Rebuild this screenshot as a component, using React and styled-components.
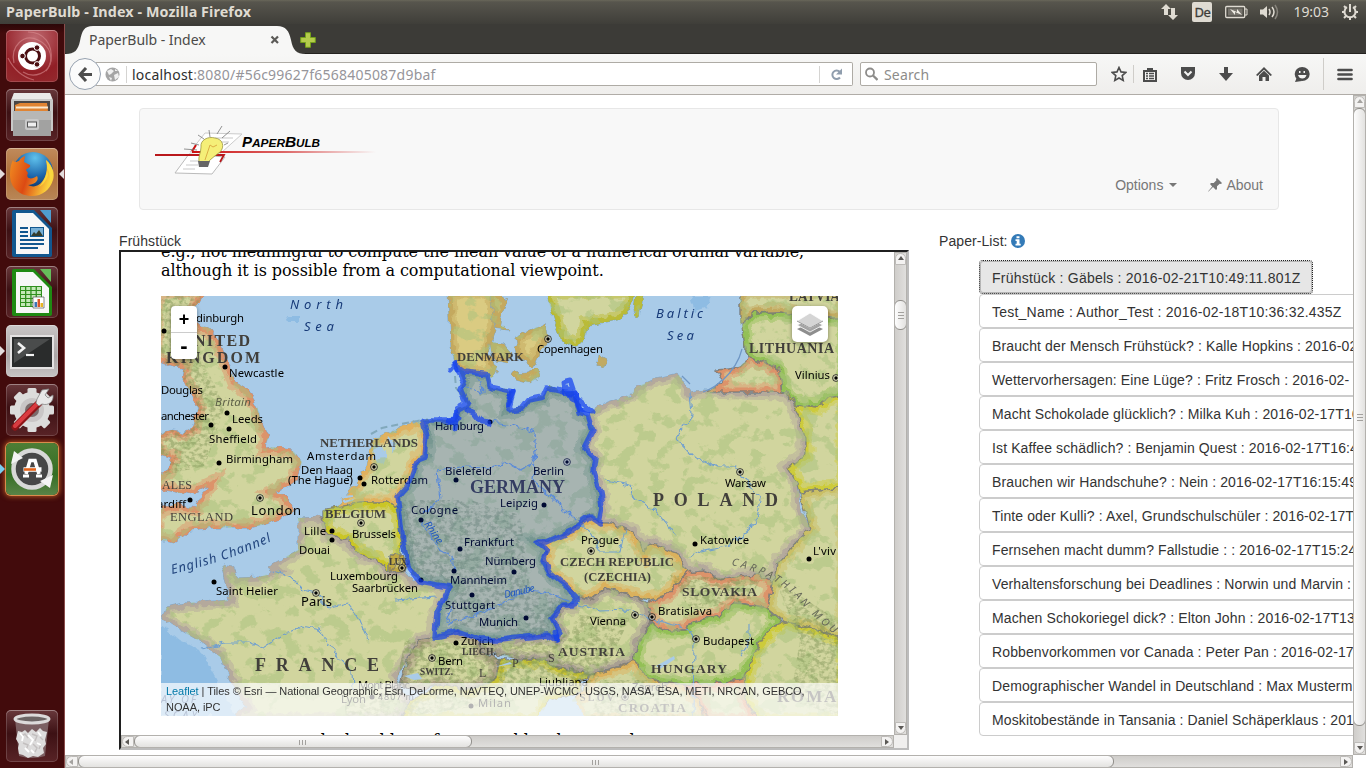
import React from "react";
import styled, { createGlobalStyle, css } from "styled-components";

const Global = createGlobalStyle`
  * { box-sizing: border-box; }
  html, body { margin: 0; padding: 0; overflow: hidden; }
  body { font-family: "Liberation Sans", Arial, sans-serif; font-size: 14px; color: #333; background: #fff; }
`;

const Desktop = styled.div`
  width: 1366px; height: 768px; display: flex; flex-direction: column; overflow: hidden;
`;
const TopPanel = styled.header`
  height: 24px; flex: none; display: flex; align-items: center; justify-content: space-between;
  padding: 0 8px 0 6px; color: #dfdbd2;
  background: linear-gradient(#69675a 0, #57554d 2px, #3f3e39 100%);
  font-family: "Noto Sans", sans-serif; font-size: 14px;
`;
const WindowTitle = styled.div`
  font-size: 14.3px; font-weight: 700; line-height: 24px; white-space: nowrap; letter-spacing: 0.1px;
`;
const Indicators = styled.div`display: flex; align-items: center; height: 24px;`;
const Lang = styled.div`
  width: 20px; height: 20px; margin: 0 13px 0 14px; border-radius: 2px; background: #dfdbd2; color: #3d3c38;
  font-size: 13px; line-height: 20px; text-align: center; letter-spacing: -0.5px; -webkit-text-stroke: 0.3px #3d3c38;
`;
const Clock = styled.div`margin: 0 13px 0 13px; font-size: 14px; letter-spacing: -0.05px; line-height: 24px;`;
const Body = styled.div`display: flex; flex: 1; min-height: 0;`;

const Launcher = styled.nav`
  width: 65px; flex: none; display: flex; flex-direction: column; padding: 6px 0 6px 6px; gap: 7px;
  background: linear-gradient(#2b0708 0, #420b0c 9px, #420b0c 100%);
  border-right: 1px solid #8b4d4c;
`;
const tones = {
  red: "radial-gradient(circle at 55% 15%, #bf6970, #921f26 65%, #942b2f)",
  dark: "linear-gradient(#68383b, #3d1114 45%, #582326)",
  orange: "linear-gradient(#c08b5c, #b06f38 50%, #b98757)",
  grey: "linear-gradient(#c9c6c6, #aba6a6 60%, #c7c4c4)",
  green: "linear-gradient(#4d7d35, #356e24 60%, #598347)",
};
const Tile = styled.div`
  position: relative; width: 52px; height: 52px; flex: none; border-radius: 5px; background: ${(p) => tones[p.$tone]};
  box-shadow: inset 0 0 0 1px rgba(255,255,255,.16), inset 0 1px 0 rgba(255,255,255,.25);
  ${(p) => p.$active && css`box-shadow: 0 0 0 1px #d98c4b, 0 0 5px 2px #a85022;`}
  ${(p) => p.$last && css`margin-top: auto;`}
  > svg { display: block; }
`;
const Pip = styled.i`
  position: absolute; top: 21px; width: 0; height: 0; border: 5px solid transparent;
  ${(p) => p.$right ? css`right: -6px; border-right-color: #e3dcdc; border-left: 0;`
    : css`left: -6px; border-left-color: ${p.$blue ? "#79cdf0" : "#e3dcdc"}; border-right: 0;`}
`;

const Browser = styled.main`flex: 1; display: flex; flex-direction: column; min-width: 0;`;
const TabStrip = styled.div`
  height: 30px; flex: none; display: flex; align-items: flex-end; background: #3c3b37; border-bottom: 1px solid #242320;
`;
const TabShape = styled.div`
  position: relative; width: 243px; height: 28px; margin-bottom: -1px; display: flex; align-items: center;
  font: 14px "Noto Sans", sans-serif; color: #4b4a48;
  > svg:first-child { position: absolute; inset: 0; }
`;
const TabText = styled.span`position: relative; padding-left: 24px; width: 204px; letter-spacing: -0.05px; margin-top: -2px;`;
const TabClose = styled.svg`position: relative; flex: none;`;
const NewTab = styled.svg`margin: 0 0 5px -8px;`;

const Toolbar = styled.div`
  height: 41px; flex: none; display: flex; align-items: center; padding-left: 4px;
  background: linear-gradient(#f7f7f6, #efeeec); border-bottom: 1px solid #b0aca7;
  font: 14px "Noto Sans", sans-serif;
`;
const BackButton = styled.div`
  width: 32px; height: 32px; border-radius: 50%; border: 1px solid #97a2b0; background: #fbfbfb; flex: none;
  display: grid; place-items: center; z-index: 1;
`;
const UrlBar = styled.div`
  width: 757px; height: 24px; margin-left: -5px; padding-left: 9px; border: 1px solid #aeaba5; border-left: 0;
  background: #fff; border-radius: 0 2px 2px 0; display: flex; align-items: center; color: #96959a;
`;
const UrlText = styled.div`
  margin-left: 6px; padding-left: 5px; border-left: 1px solid #d5d4d2; line-height: 17px; flex: 1; letter-spacing: 0.22px; white-space: nowrap;
  b { font-weight: 400; color: #2e2e2e; }
`;
const Reload = styled.div`width: 33px; border-left: 1px solid #d5d4d2; height: 17px; display: grid; place-items: center;`;
const SearchBox = styled.div`
  width: 237px; height: 24px; margin-left: 7px; border: 1px solid #aeaba5; border-radius: 2px; background: #fff; color: #8d8c8a;
  display: flex; align-items: center; gap: 6px; padding-left: 4px; letter-spacing: 0.15px;
`;
const ToolIcons = styled.div`
  display: flex; align-items: center; margin-left: 14px; height: 40px; flex: 1;
  > svg { flex: none; }
`;
const Divider = styled.i`width: 1px; height: ${(p) => p.$h}px; background: #cfcdc9; margin: 0 ${(p) => p.$r}px 0 ${(p) => p.$l}px;`;

const Viewport = styled.section`flex: 1; display: grid; grid-template: 1fr 13px / 1fr 13px; min-height: 0;`;
const Page = styled.div`overflow: hidden; padding: 13px 0 0 54px; background: #fff; min-width: 0; height: 660px;`;
const Navbar = styled.div`
  width: 1140px; height: 102px; margin-left: 20px; border: 1px solid #e7e7e7; border-radius: 4px; background: #f8f8f8;
  display: flex; flex-direction: column; justify-content: space-between; padding: 16px 15px 14px;
  > svg { flex: none; align-self: flex-start; }
`;
const Links = styled.div`display: flex; justify-content: flex-end; color: #777; line-height: 20px; height: 20px; margin-top: -4px; gap: 31px;`;
const Link = styled.span`display: flex; align-items: center; gap: 4px;`;
const Caret = styled.i`border: 4px solid transparent; border-top-color: #777; border-bottom: 0; margin-left: 2px;`;
const Columns = styled.div`display: flex; align-items: flex-start; margin-top: 21px;`;
const Label = styled.div`line-height: 20px; height: 19px; display: flex; align-items: center; gap: 3px; letter-spacing: 0.08px;`;
const Left = styled.div`width: 790px; flex: none;`;
const Frame = styled.div`
  height: 500px; border: 2px solid #1f1f1f; border-right-color: #bcbcbc; border-bottom-color: #bcbcbc;
  display: grid; grid-template: 1fr 13px / 1fr 13px; background: #f0efee;
`;
const Doc = styled.div`
  height: 483px; overflow: hidden; background: #fff; padding-left: 40px;
  font: 16px/19px "DejaVu Serif", serif; color: #000; white-space: nowrap; letter-spacing: -0.08px;
`;
const Para = styled.p`margin: -10px 0 0;`;
const Caption = styled.p`margin: 15px 0 0; padding-left: 101px; font-size: 16px;`;
const MapBox = styled.div`position: relative; width: 677px; height: 420px; margin-top: 16px; overflow: hidden; letter-spacing: 0; svg { display: block; }`;
const ZoomControl = styled.div`
  position: absolute; left: 10px; top: 10px; width: 26px; border-radius: 4px; background: #fff; box-shadow: 0 1px 4px rgba(0,0,0,.4);
  font: 700 18px/26px "Liberation Sans", sans-serif; text-align: center; color: #000;
  > div { height: 26px; } > div + div { height: 27px; border-top: 1px solid #ccc; font-size: 22px; }
`;
const LayerControl = styled.div`
  position: absolute; right: 10px; top: 10px; width: 36px; height: 36px; border-radius: 5px; background: #fff;
  box-shadow: 0 1px 4px rgba(0,0,0,.4); display: grid; place-items: center;
`;
const Attribution = styled.div`
  position: absolute; left: 0; right: 0; bottom: 0; height: 33px; background: rgba(255,255,255,.7); padding: 0 5px;
  font: 11px/16.3px "Liberation Sans", sans-serif; color: #333; white-space: normal; letter-spacing: -0.063px;
  a { color: #0078a8; }
`;
const Right = styled.div`margin-left: 30px; flex: 1; min-width: 0;`;
const List = styled.div`margin: 10px 0 0 40px; display: flex; flex-direction: column; align-items: flex-start;`;
const Entry = styled.div`
  height: 34px; line-height: 20px; padding: 7px 12px 5px; border: 1px solid #ccc; border-radius: 4px; white-space: nowrap; min-width: 400px;
  letter-spacing: ${(p) => (p.$wide ? 0.22 : 0.12)}px;
  ${(p) => p.$on && css`min-width: 0; width: 334px; background: #e6e6e6; border: 1px dotted #222; outline: 1px solid #b5b5b5; outline-offset: -2px; `}
`;

const Track = styled.div`
  display: flex; flex-direction: ${(p) => (p.$v ? "column" : "row")}; align-items: stretch;
  background: linear-gradient(${(p) => (p.$v ? "90deg" : "180deg")}, #cfcdca, #e0dfdd); border: 1px solid #b3b1ad;
  ${(p) => p.$v ? css`width: 13px;` : css`height: 13px;`} overflow: hidden;
`;
const ArrowCap = styled.div`
  flex: 0 0 12px; background: #f3f2f1; display: grid; place-items: center; border-radius: ${(p) => p.$r};
  border: 1px solid #bdbbb8;
`;
const Grip = styled.div`
  flex: 0 0 ${(p) => p.$size}px; margin: ${(p) => (p.$v ? `${p.$at}px -1px 0` : `-1px 0 -1px ${p.$at}px`)};
  background: linear-gradient(${(p) => (p.$v ? "90deg" : "180deg")}, #fdfdfd, #e3e2e0); border: 1px solid #918f8b; border-radius: 6px;
  display: grid; place-items: center;
`;
const Spacer = styled.div`flex: 1;`;

const ARROWS = { up: "M0 4L3 0L6 4z", down: "M0 1L3 5L6 1z", left: "M4 0L0 3L4 6z", right: "M1 0L5 3L1 6z" };
const Arrow = ({ d, dim }) => <svg width="6" height="6"><path d={ARROWS[d]} fill={dim ? "#a5a3a0" : "#5b5956"} /></svg>;

function Scrollbar({ v, size, at, dim }) {
  return (
    <Track $v={v}>
      <ArrowCap $r={v ? "6px 6px 0 0" : "6px 0 0 6px"}><Arrow d={v ? "up" : "left"} dim={dim} /></ArrowCap>
      <Grip $v={v} $size={size} $at={at}>
        <svg width="8" height="8"><path d={v ? "M1 1.5h6M1 4.5h6M1 7.5h6" : "M.5 2v5M3.5 2v5M6.5 2v5"} stroke="#a3a19e" /></svg>
      </Grip>
      <Spacer />
      <ArrowCap $r={v ? "0 0 6px 6px" : "0 6px 6px 0"}><Arrow d={v ? "down" : "right"} /></ArrowCap>
    </Track>
  );
}

/* ---------- launcher icons ---------- */
const Ico = ({ children }) => <svg width="52" height="52" viewBox="0 0 52 52">{children}</svg>;
const DashIcon = () => (
  <Ico>
    <g fill="none" stroke="#d98d90" strokeWidth="1.2" opacity=".6">
      <path d="M8 33C4 16 18 3 32 10C45 16 49 30 40 41" /><path d="M22 2C38 2 47 14 45 31C43 43 28 49 17 42" /><path d="M2 28C8 40 16 47 28 50" />
    </g>
    <circle cx="26" cy="26" r="14" fill="#fff" />
    <circle cx="26.5" cy="26" r="7" fill="none" stroke="#4b0e11" strokeWidth="3" />
    {[[16.5, 26], [31, 17.6], [31, 34.4]].map(([x, y]) => <circle key={y} cx={x} cy={y} r="2.8" fill="#4b0e11" stroke="#fff" strokeWidth="1" />)}
  </Ico>
);
const FilesIcon = () => (
  <Ico>
    <path d="M8 4h36l3 7v31H5V11z" fill="#c9c9c8" /><path d="M8 4h36l2 6H6z" fill="#e9e9e8" />
    <path d="M8 12h36v11H8z" fill="#4a4645" /><path d="M9 16l5-2h27l1 8H9z" fill="#e08433" /><path d="M10 17.5h32v2H10z" fill="#fbe9cf" />
    <path d="M7 22h38v25H7z" fill="#a2a2a1" /><path d="M7 22h38v9H7z" fill="#b7b7b6" />
    <rect x="19" y="30" width="14" height="11" rx="2" fill="#c9c9c9" /><rect x="21.5" y="33" width="9" height="5" fill="#efefef" stroke="#555" />
  </Ico>
);
const FirefoxIcon = () => (
  <Ico>
    <defs>
      <radialGradient id="ffBlue" cx=".55" cy=".15" r=".8"><stop offset="0" stopColor="#5fc1ec" /><stop offset=".6" stopColor="#1a62a8" /><stop offset="1" stopColor="#10305f" /></radialGradient>
      <linearGradient id="ffFox" x1="0" y1="0" x2="1" y2=".3"><stop offset="0" stopColor="#f29022" /><stop offset=".5" stopColor="#dc4a13" /><stop offset="1" stopColor="#fbd13c" /></linearGradient>
    </defs>
    <circle cx="27" cy="24" r="20" fill="url(#ffBlue)" />
    <path d="M7 12C8 15 10 14 13 13C16 8 20 8 19 8L18 14L24 17C25 20 21 20 20 22L22 25C19 31 26 32 31 28C34 33 27 37 22 37C33 43 44 29 40 12C47 18 49 26 47 32C44 42 36 48 26 48C13 48 4 39 4 27C4 20 5 16 7 12z" fill="url(#ffFox)" />
    <path d="M40 12C48 19 49 30 43 38C45 31 44 25 41 20L42 27C40 34 36 37 33 39C40 31 43 22 40 12z" fill="#f9d83e" />
  </Ico>
);
const OfficeIcon = ({ calc }) => {
  const main = calc ? "#1f8a13" : "#12578f";
  const light = calc ? "#66bd5a" : "#4f9dd0";
  return (
    <Ico>
      <path d="M8 3h20l18 18v27a2 2 0 0 1-2 2H8a2 2 0 0 1-2-2V5a2 2 0 0 1 2-2z" fill={main} />
      <path d="M10 6h17l16 16v25H10z" fill="#f7f7f7" /><path d="M34 3h11v13z" fill={light} />
      {calc ? (
        <g><path d="M14 20h22v21H14z" fill="#2f8f1d" /><g fill="#c4e8b8">{[0, 1, 2, 3, 4].map((r) => [0, 1, 2, 3].map((c) => <rect key={`${r}${c}`} x={15 + c * 5.3} y={21 + r * 4} width="4" height="3" />))}</g>
          <path d="M27 31h11v11H27z" fill="#fff" stroke="#555" strokeWidth=".7" /><path d="M28.5 36h2.5v5h-2.5z" fill="#3b74b8" /><path d="M31.5 33h2.5v8h-2.5z" fill="#d8562a" /><path d="M34.5 37h2.5v4h-2.5z" fill="#e7b422" /></g>
      ) : (
        <g><path d="M14 21h8M14 25h8M14 29h8M14 33h24M14 37h24M14 41h18" stroke={main} strokeWidth="2" /><path d="M24 20h14v10H24z" fill={main} /><path d="M25 21h12v8H25z" fill="#78b0d6" /><path d="M25 29l3-4 2 2 3-4 4 6z" fill="#353c2c" /></g>
      )}
    </Ico>
  );
};
const TerminalIcon = () => (
  <Ico><path d="M4 10h44v34H4z" fill="#e4e2e2" /><path d="M6 12h40v30H6z" fill="#2a2c2c" /><path d="M8 14h36L8 38z" fill="#4a4c4c" />
    <path d="M12 18l6 5-6 5" fill="none" stroke="#f2f2f2" strokeWidth="2.6" /><path d="M20 30h8" stroke="#f2f2f2" strokeWidth="2.2" /></Ico>
);
const Teeth = () => Array.from({ length: 8 }, (_, i) => <rect key={i} x="21.5" y="4" width="9" height="10" rx="1.5" transform={`rotate(${i * 45} 26 26)`} />);
const SettingsIcon = () => (
  <Ico>
    <g fill="#dcdcdb"><Teeth /><circle cx="26" cy="26" r="18" /></g><circle cx="26" cy="26" r="12" fill="#c9c6c6" /><circle cx="26" cy="26" r="7" fill="#7b6b6b" />
    <path d="M9 43L33 19" stroke="#8e1518" strokeWidth="7" strokeLinecap="round" /><path d="M9 42L32 19" stroke="#d93b40" strokeWidth="4" strokeLinecap="round" />
    <path d="M31 15L36 6L43 5L39 11L42 14L47 11C48 18 42 22 36 20L33 22L30 19z" fill="#e8e8e8" stroke="#858585" strokeWidth=".8" />
  </Ico>
);
const UpdateIcon = () => (
  <Ico>
    <circle cx="26" cy="26" r="18.5" fill="#474747" stroke="#d8d8d7" strokeWidth="4.5" />
    <path d="M5 21L8 8L17 15z" fill="#f4f4f4" /><path d="M47 32L44 45L34 38z" fill="#f4f4f4" />
    <path d="M20 31L24 17.5h5L33 31" fill="none" stroke="#fff" strokeWidth="3.6" /><path d="M17 33h6M30 33h6" stroke="#fff" strokeWidth="3" />
    <path d="M17.5 26.5h18" stroke="#fff" strokeWidth="4.5" /><path d="M18 26.5h12" stroke="#e5641b" strokeWidth="2.6" />
  </Ico>
);
const TrashIcon = () => (
  <Ico>
    <path d="M9 9L13 46Q26 50 39 46L43 9z" fill="#8c7779" opacity=".75" />
    <path d="M12 21l4 1 3-2 3 3 4-4 4 3 4-4 3 3 4 1-2 8 1 4-3 4 1 5-6 4-5-1-5 2-5-3-4-1-1-6 1-4-3-5z" fill="#dddcdc" />
    <path d="M15 26l4-2 3 4M26 24l5 2-2 5M34 27l3 3M17 33l5 2-2 5M27 34l4 4-2 4M35 34l-2 5" fill="none" stroke="#c3bfbf" strokeWidth="1.4" />
    <path d="M14 23l3 4-1 4M22 25l5 5-3 5M32 22l3 4M19 38l4 4M31 33l4 2M25 40l3 3" fill="none" stroke="#fff" strokeWidth="1.8" />
    <ellipse cx="26" cy="9" rx="17" ry="4" fill="#6c6464" stroke="#dcdada" strokeWidth="3" />
  </Ico>
);

/* ---------- site logo ---------- */
const Logo = () => (
  <svg width="222" height="52" viewBox="0 0 222 52" overflow="visible">
    <defs><linearGradient id="fade"><stop offset="0" stopColor="#c11" /><stop offset=".5" stopColor="#d66" /><stop offset="1" stopColor="#f8f8f8" /></linearGradient></defs>
    <path d="M50 8L87 9L66 28L35 27z" fill="#fff" stroke="#ccc" /><path d="M34 29L70 32L57 49L20 48z" fill="#fff" stroke="#bbb" />
    <path d="M60 13h18M56 17h18M35 36h13M31 40h12M28 44h12" stroke="#bbb" strokeWidth=".8" />
    <path d="M0 30H69L65 37" fill="none" stroke="#b9181c" strokeWidth="1.8" /><path d="M41 20L37 26.5" stroke="#c11" strokeWidth="2" />
    <rect x="37" y="26" width="184" height="2" fill="url(#fade)" />
    <path d="M67 1L62 9M75 6L67 13M54 5L55 12M43 10L49 14M36 18L44 20M73 18L69 20M29 24L42 25" stroke="#777" strokeWidth=".8" />
    <path d="M46 22C45 15 53 11 60 13C68 14 70 22 65 27C61 30 57 33 53 37H44C43 31 46 28 46 22z" fill="#f5ef78" stroke="#9b9640" strokeWidth=".8" />
    <path d="M50 35L55 20L58 22L62 20" fill="none" stroke="#dcae45" /><path d="M43 36h12l-2 6h-9z" fill="#666" />
    <g fontFamily="Liberation Sans, sans-serif" fontStyle="italic" fontWeight="700" fill="#000">
      <text x="87" y="21.5" fontSize="15">P</text><text x="97" y="21.5" fontSize="11.5" textLength="33" lengthAdjust="spacingAndGlyphs">APER</text><text x="130" y="22" fontSize="15.5">B</text><text x="141" y="22" fontSize="11.5" textLength="24" lengthAdjust="spacingAndGlyphs">ULB</text>
    </g>
  </svg>
);

/* ---------- map ---------- */
const COUNTRIES = [
  ["uk", "#dd8d66", "M155 290H207L197 305L188 315L200 326L210 328L220 345L228 363L235 382L248 390L257 405L260 418L268 438L266 448L273 447L293 450L302 462L295 482L275 492L283 495L293 505L292 513L273 522L250 528L210 528L190 530L173 543L155 538V510L178 504L195 508L207 487L190 495L155 488V478L168 470L172 458L155 452V435L172 430L185 432L193 428L198 408L193 395L182 378L184 367L172 366L155 360z"],
  ["nl", "#e2ae58", "M337 507L355 485L367 465L373 440L400 428L423 420L427 437L425 457L417 460L410 482L397 497L398 507L387 503L360 503z"],
  ["be", "#c9c41c", "M323 517L323 510L337 507L360 503L387 503L398 507L400 517L403 543L398 563L390 572L377 560L360 555L347 540L327 533z"],
  ["lux", "#bda33a", "M390 555L403 555L408 562L405 571L390 572z"],
  ["fr", "#b1a49c", "M298 518L323 517L327 533L347 540L360 555L377 560L390 572L405 571L413 582L420 582L450 587L437 613L435 637L420 640L407 660L397 677L400 687L410 700L400 722H240L235 715L246 707L240 697L227 673L220 657L203 643L177 628L162 617L167 607L185 603L200 602L230 600L227 587L222 565L232 567L237 578L260 577L275 571L267 567L280 560L298 550z"],
  ["ch", "#a99c83", "M435 637L457 632L480 640L482 652L500 660L495 680L470 690L440 685L415 690L400 685L407 660L420 640z"],
  ["dk", "#c2a65a", "M448 290H493L497 325L488 352L497 368L492 378L465 371L457 367L450 345z"],
  ["dk2", "#c2a65a", "M515 338L525 332L545 323L548 343L540 352L533 368L517 355z"],
  ["dk3", "#c2a65a", "M490 342L503 343L510 353L507 363L493 360z"],
  ["dk4", "#c2a65a", "M513 373L528 372L538 368L540 376L530 383L515 379z"],
  ["dk5", "#c2a65a", "M490 290L508 300L500 320L508 330L494 328z"],
  ["bh", "#bfa65f", "M598 355L607 360L604 367L597 363z"],
  ["se", "#b7b92f", "M545 290L553 315L562 342L577 347L585 338L587 325L620 320L633 302L635 290z"],
  ["oe", "#b7b92f", "M637 290L643 290L638 318L635 312z"],
  ["de", "#8fae72", "M455 365L465 372L488 375L490 387L513 392L508 410L522 408L528 400L543 397L547 388L563 392L575 393L580 412L588 415L593 430L584 448L595 458L593 472L600 493L602 508L599 523L590 517L573 530L547 542L537 542L547 550L543 560L550 573L567 587L577 598L573 605L563 605L552 618L560 633L557 640L547 635L527 637L500 640L480 640L457 632L435 637L437 613L450 587L420 582L408 567L403 543L400 517L397 497L410 482L417 460L425 457L427 437L423 420L455 420L458 410L467 405L460 390L465 382z"],
  ["pl", "#b1a49c", "M588 415L600 405L630 395L637 387L657 378L678 373L683 382L690 392L703 390L783 392L793 398L805 438L805 455L788 468L798 485L800 507L810 528L778 563L773 583L757 575L737 577L720 580L703 570L687 572L677 553L650 543L645 552L633 533L613 523L599 523L602 508L600 493L593 472L595 458L584 448L593 430z"],
  ["lv", "#c2a65a", "M740 290V325L753 313L780 312L810 318L845 318V290z"],
  ["lt", "#8dbe50", "M742 325L753 313L780 312L810 318L845 318V395L827 398L818 407L797 405L783 392L780 372L767 363L750 358L745 348z"],
  ["kg", "#dd8d66", "M717 370L737 368L745 362L750 358L767 363L780 372L783 392L707 392L723 382z"],
  ["by", "#cdca32", "M783 392L797 405L818 407L827 398L845 395V487L800 492L798 485L788 468L805 455L805 438L793 398z"],
  ["ua", "#c9bd62", "M800 492L845 487V640L810 627L785 622L767 608L773 583L778 563L810 528z"],
  ["cz", "#dcae57", "M599 523L613 523L633 533L645 552L650 543L677 553L687 572L667 595L650 600L637 597L605 588L590 600L578 597L567 587L550 573L543 560L547 550L537 542L547 542L573 530L590 517z"],
  ["sk", "#dd8d66", "M687 572L703 570L720 580L737 577L757 575L773 583L767 608L753 605L735 603L720 615L690 623L687 630L663 630L652 622L647 603L667 595z"],
  ["hu", "#8dbe50", "M652 622L663 630L687 630L690 623L720 615L735 603L753 605L767 608L782 622L772 628L757 647L745 677L723 683L683 685L657 682L643 673L635 660L638 643L647 630z"],
  ["at", "#a59a90", "M577 598L590 600L605 588L637 597L647 603L652 622L638 643L635 660L617 667L590 675L557 667L547 660L525 660L500 655L482 652L480 640L500 640L527 637L547 635L557 640L560 633L552 618L563 605L573 605z"],
  ["it", "#c5bf2c", "M500 660L525 660L547 660L557 667L590 675L580 682L582 692L560 697L547 702L540 722H400L410 700L440 685L470 690L495 680z"],
  ["hr", "#dcae57", "M590 675L617 667L635 660L643 673L657 682L683 685L700 700L710 722H580L572 700L582 692z"],
  ["ro", "#cdca32", "M785 622L810 627L845 640V722H760L745 700V677L757 647L772 628z"],
  ["rs", "#dd8d66", "M683 685L723 683L745 677L745 700L760 722H705L700 700z"],
];
const GERMANY = COUNTRIES.find((c) => c[0] === "de")[2];
const RIVERS = "M203 649L225 643L248 643L262 648L280 636L303 626L320 630L330 645L340 660L352 672L353 690M275 571L290 577L303 590L316 593L330 608L348 604L360 620L368 640M421 520L430 535L440 550L452 556L454 571M424 513L440 500L437 470L465 466L490 467L508 463L520 470L530 465L536 455L534 432L513 425L490 422M536 455L532 480L555 500L575 520M448 622L462 620L500 605L530 590L545 592L577 604L600 611L630 610L652 619L690 630L694 640L693 716M690 392L692 415L676 438L694 457L716 466L735 466L745 480L760 500L755 525L730 545L700 552L690 557M676 536L655 510L636 500L630 485L602 479M580 524L592 533L600 552L620 552L625 530M748 622L748 645L740 656M395 600L437 597M460 387L484 392L478 378M452 605L446 622";

const S = "s", C = "c", W = "w", G = "g";
const LABELS = [
  [S, "dinburgh", 196, 322, 48], [S, "Newcastle", 229, 377, 55], [S, "Douglas", 161, 394, 42], [S, "anchester", 161, 420, 48],
  [S, "Leeds", 232, 423, 31], [S, "Sheffield", 209, 443, 48], [S, "Birmingham", 226, 463, 67], [S, "ardiff", 157, 508, 29],
  [S, "London", 251, 515, 50, 13], [S, "Amsterdam", 307, 460, 69], [S, "Den Haag", 301, 474, 52], [S, "(The Hague)", 288, 484, 65],
  [S, "Rotterdam", 371, 484, 57], [S, "Brussels", 352, 538, 44], [S, "Lille", 304, 535, 22], [S, "Douai", 299, 554, 31],
  [S, "Luxembourg", 330, 580, 68], [S, "Saarbrücken", 352, 592, 66], [S, "Saint Helier", 216, 595, 62], [S, "Paris", 301, 606, 31, 13],
  [S, "Lyon", 341, 703, 25], [S, "Mont Blanc", 358, 689, 52], [S, "4807 m", 378, 700, 36, 9], [S, "Bern", 438, 665, 25],
  [S, "Zürich", 461, 645, 33], [S, "Milan", 478, 707, 33], [S, "Copenhagen", 537, 353, 66], [S, "Vilnius", 795, 379, 35],
  [S, "Hamburg", 435, 430, 49], [S, "Bielefeld", 445, 475, 47], [S, "Berlin", 533, 475, 31], [S, "Leipzig", 500, 507, 38],
  [S, "Cologne", 411, 514, 47], [S, "Frankfurt", 464, 546, 50], [S, "Nürnberg", 485, 565, 51], [S, "Mannheim", 450, 584, 57],
  [S, "Stuttgart", 445, 609, 50], [S, "Munich", 479, 626, 39], [S, "Warsaw", 725, 487, 41], [S, "Prague", 581, 544, 38],
  [S, "Katowice", 700, 544, 49], [S, "L'viv", 813, 555, 23], [S, "Bratislava", 658, 615, 54], [S, "Vienna", 590, 625, 36],
  [S, "Budapest", 703, 645, 51], [S, "Ljubliana", 539, 686, 49], [S, "Zagreb", 632, 691, 36],
  [C, "UNITED", 181, 346, 69, 16], [C, "KINGDOM", 166, 363, 94, 16], [C, "NETHERLANDS", 320, 447, 98, 13], [C, "BELGIUM", 325, 517.5, 61, 13],
  [C, "DENMARK", 457, 360.5, 67, 13], [C, "GERMANY", 470, 493, 95, 18], [C, "POLAND", 653, 506, 125, 18], [C, "FRANCE", 255, 671, 124, 18],
  [C, "LITHUANIA", 749, 352.5, 85, 14], [C, "LATVIA", 789, 301, 51, 14], [C, "CZECH REPUBLIC", 560, 565.5, 114, 13], [C, "(CZECHIA)", 584, 580.5, 67, 13],
  [C, "SLOVAKIA", 682, 596, 75, 13.5], [C, "AUSTRIA", 558, 656, 67, 13.5], [C, "HUNGARY", 651, 673, 76, 13.5], [C, "SWITZ.", 420, 675, 33, 9.5],
  [C, "LIECH.", 462, 655, 34, 9.5], [C, "LUX.", 389, 565, 20, 9.5], [C, "SLOV", 580, 701, 34, 10], [C, "CROATIA", 618, 712, 68, 13], [C, "ROMANIA", 777, 702, 96, 17],
  [G, "ENGLAND", 170, 521, 63, 12.5], [G, "ALES", 162, 489, 30, 12], [G, "L", 479, 677, 7, 12], [G, "P", 512, 667, 7, 12], [G, "S", 548, 662, 6, 12],
  [W, "North", 290, 309, 53, 13], [W, "Sea", 304, 331, 30, 13], [W, "Baltic", 656, 318, 47, 13], [W, "Sea", 667, 340, 27, 13], [W, "AY OF", 161, 703, 35, 11], [W, "SCAY", 164, 719, 33, 11],
];
const LABEL_STYLE = {
  s: { fontFamily: "Noto Sans, sans-serif", fill: "#000" },
  c: { fontFamily: "Liberation Serif, serif", fontWeight: 700, fill: "#413f3b" },
  g: { fontFamily: "Liberation Serif, serif", fill: "#413f3b" },
  w: { fontFamily: "Noto Sans, sans-serif", fontStyle: "italic", fill: "#173a78" },
};
const SQUEEZED = ["CZECH REPUBLIC", "(CZECHIA)", "LATVIA", "LIECH.", "SWITZ.", "NETHERLANDS", "BELGIUM", "DENMARK"];
const TOWNS = [[164, 331], [225, 367], [227, 413], [211, 425], [229, 429], [219, 463], [190, 500], [360, 478], [364, 484], [490, 422], [456, 480], [544, 505], [332, 531], [332, 540], [421, 520], [460, 549], [454, 571], [472, 595], [421, 580], [214, 582], [456, 643], [372, 697], [471, 706], [514, 572], [526, 618], [695, 544], [809, 559]];
const CAPITALS = [[260, 498], [374, 467], [548, 339], [836, 378], [567, 462], [740, 472], [361, 523], [402, 568], [316, 593], [432, 658], [591, 551], [635, 615], [652, 617], [696, 639], [625, 697]];

const MapLabel = ({ item: [kind, text, x, y, w, size = 11.3] }) => (
  <text x={x} y={y} textLength={w} lengthAdjust={SQUEEZED.includes(text) ? "spacingAndGlyphs" : "spacing"} fontSize={size} {...LABEL_STYLE[kind]}>{text}</text>
);

function EuropeMap() {
  return (
    <svg width="677" height="420" viewBox="161 296 677 420">
      <defs>
        <filter id="rough" x="-5%" y="-5%" width="110%" height="110%">
          <feTurbulence type="fractalNoise" baseFrequency=".13" numOctaves="2" seed="4" /><feDisplacementMap in="SourceGraphic" scale="8" xChannelSelector="R" yChannelSelector="G" />
        </filter>
        <filter id="roughBlue" x="-5%" y="-5%" width="110%" height="110%" colorInterpolationFilters="sRGB">
          <feTurbulence type="fractalNoise" baseFrequency=".09" numOctaves="1" seed="9" /><feDisplacementMap in="SourceGraphic" scale="8" xChannelSelector="R" yChannelSelector="G" />
        </filter>
        <filter id="woods" x="0" y="0" width="100%" height="100%" colorInterpolationFilters="sRGB">
          <feTurbulence type="fractalNoise" baseFrequency=".06 .07" numOctaves="5" seed="21" />
          <feColorMatrix values="0 0 0 0 .66  0 0 0 0 .76  0 0 0 0 .49  14 0 0 0 -7.6" /><feComposite operator="in" in2="SourceGraphic" />
        </filter>
        <filter id="relief" x="0" y="0" width="100%" height="100%" colorInterpolationFilters="sRGB">
          <feTurbulence type="fractalNoise" baseFrequency=".2 .26" numOctaves="3" seed="5" />
          <feColorMatrix values="0 0 0 0 .45  0 0 0 0 .54  0 0 0 0 .3  0 4 0 0 -1.7" /><feComposite operator="in" in2="SourceGraphic" />
          <feGaussianBlur stdDeviation=".5" />
        </filter>
        <clipPath id="land">{COUNTRIES.map(([id, , d]) => <path key={id} d={d} />)}</clipPath>
        {COUNTRIES.map(([id, , d]) => <clipPath key={id} id={`cp-${id}`}><path d={d} /></clipPath>)}
        <path id="carpath" d="M731 565Q775 575 798 600T842 640" />
        <path id="channel" d="M172 574Q225 562 272 541" />
      </defs>
      <rect x="161" y="296" width="677" height="420" fill="#a9cbe8" />
      <path d="M161 625L180 640L200 650L222 690L236 716H161zM287 316h12v6h-10zM690 296h22l-5 12-12 4z" fill="#86b8e2" opacity=".75" filter="url(#rough)" />
      <g filter="url(#rough)">
        {COUNTRIES.map(([id, halo, d]) => (
          <g key={id}>
            <path d={d} fill={id.startsWith("dk") ? "#dacb82" : "#d1d59e"} stroke="#7fa8cc" strokeWidth="1" />
            <g clipPath={`url(#cp-${id})`} fill="none" stroke={halo}>
              <path d={d} strokeWidth="17" opacity=".45" /><path d={d} strokeWidth="9" opacity=".85" />
            </g>
          </g>
        ))}
        <g fill="none" stroke="#77736c" strokeWidth="1.4" opacity=".7">
          {COUNTRIES.filter(([id]) => !["uk", "dk", "dk2", "dk3", "dk4", "dk5", "bh", "se", "oe", "de", "nl", "fr", "pl"].includes(id)).map(([id, , d]) => <path key={id} d={d} />)}
        </g>
        <path d="M375 445L386 452L383 464L376 460zM388 440l8 2-4 9zM338 497l14-3M342 502l12-2M548 703L560 698L574 698L582 716H540z" fill="#a9cbe8" stroke="#a9cbe8" strokeWidth="2" />
      </g>
      <g clipPath="url(#land)"><rect x="161" y="296" width="677" height="420" filter="url(#woods)" opacity=".5" /></g>
      <g clipPath="url(#land)">
        <path d="M161 296h42l-8 50 30 60-20 60-44 10zM405 640L480 645L560 640L580 615L630 618L610 660L590 690L410 716L395 690zM400 500L470 500L520 515L530 590L570 600L550 635L450 625L455 590L410 570zM670 575L760 580L750 600L690 610zM775 580L838 620V716L790 700L800 640zM345 700L400 690V716H345zM600 680h60l20 36h-90z" fill="#000" filter="url(#relief)" opacity=".42" />
      </g>
      <path d={RIVERS} fill="none" stroke="#6f9fd0" strokeWidth="1.1" filter="url(#rough)" />
      <path d="M656 666L674 656L675 659L660 669zM495 667l15-5 2 2zM404 676l14-3 4 6-8 1z" fill="#a9cbe8" />
      <path d="M722 381Q738 366 742 349M682 376L690 384M703 392Q715 388 722 380" fill="none" stroke="#6f96c4" strokeWidth="1.2" />
      <path d="M371 434L382 428L400 424L423 420M455 376L456 388L465 400" fill="none" stroke="#82a9bc" strokeWidth="2" strokeDasharray="7 4" />

      <g stroke="#111">
        {TOWNS.map(([x, y]) => <circle key={`${x}-${y}`} cx={x} cy={y} r="2.5" fill="#000" stroke="none" />)}
        {CAPITALS.map(([x, y]) => <g key={`${x}-${y}`}><circle cx={x} cy={y} r="3.4" fill="#deddc8" fillOpacity=".6" strokeWidth=".8" /><circle cx={x} cy={y} r="1.7" stroke="none" /></g>)}
      </g>
      {LABELS.map((item) => <MapLabel key={item[1] + item[3]} item={item} />)}
      <text x="215" y="406" textLength="36" fontSize="11.5" fontFamily="Noto Sans, sans-serif" fontStyle="italic" fill="#5d6048">Britain</text>
      <text x="0" y="0" transform="translate(505 598) rotate(-13)" textLength="31" fontSize="10" fontFamily="Noto Sans, sans-serif" fontStyle="italic" fill="#2860b0">Danube</text>
      <text x="0" y="0" transform="translate(424 524) rotate(56)" textLength="25" fontSize="10" fontFamily="Noto Sans, sans-serif" fontStyle="italic" fill="#2860b0">Rhine</text>
      <text fontSize="13" letterSpacing="1" fontFamily="Noto Sans, sans-serif" fontStyle="italic" fill="#24477f"><textPath href="#channel" textLength="106">English Channel</textPath></text>
      <text fontSize="10.5" letterSpacing="3.2" fontFamily="Noto Sans, sans-serif" fontStyle="italic" fill="#66685a"><textPath href="#carpath">CARPATHIAN MOU</textPath></text>

      <g filter="url(#roughBlue)">
        <path d={GERMANY} fill="#03f" fillOpacity=".2" stroke="#0f3df0" strokeOpacity=".66" strokeWidth="5.5" strokeLinejoin="round" />
        <path d="M467 410L474 413L481 422L490 423M450 370L455 364L457 370M513 392L508 404M563 392L562 382L570 380L574 392L566 388L572 398L581 402L593 412L580 410L576 396M555 632L558 640M456 412L454 428M449 420l9-2" fill="none" stroke="#0f3df0" strokeOpacity=".7" strokeWidth="5" strokeLinejoin="round" strokeLinecap="round" />
      </g>
    </svg>
  );
}

const LayersIcon = () => (
  <svg width="28" height="28" viewBox="0 0 28 28">
    <path d="M1 19L14 13L27 19L14 26z" fill="#8e8e8e" /><path d="M1 15L14 9L27 15L14 22z" fill="#a5a5a5" stroke="#fff" strokeWidth=".8" /><path d="M1 11L14 3L27 11L14 18z" fill="#d5d5d5" stroke="#fff" strokeWidth=".8" />
    <path d="M1 11L14 18L27 11" fill="none" stroke="#999" />
  </svg>
);

const PAPERS = [
  "Frühstück : Gäbels : 2016-02-21T10:49:11.801Z",
  "Test_Name : Author_Test : 2016-02-18T10:36:32.435Z",
  "Braucht der Mensch Frühstück? : Kalle Hopkins : 2016-02",
  "Wettervorhersagen: Eine Lüge? : Fritz Frosch : 2016-02-",
  "Macht Schokolade glücklich? : Milka Kuh : 2016-02-17T16",
  "Ist Kaffee schädlich? : Benjamin Quest : 2016-02-17T16:4",
  "Brauchen wir Handschuhe? : Nein : 2016-02-17T16:15:49",
  "Tinte oder Kulli? : Axel, Grundschulschüler : 2016-02-17T",
  "Fernsehen macht dumm? Fallstudie : : 2016-02-17T15:24",
  "Verhaltensforschung bei Deadlines : Norwin und Marvin :",
  "Machen Schokoriegel dick? : Elton John : 2016-02-17T13",
  "Robbenvorkommen vor Canada : Peter Pan : 2016-02-17",
  "Demographischer Wandel in Deutschland : Max Musterm",
  "Moskitobestände in Tansania : Daniel Schäperklaus : 201",
];

export default function App() {
  return (
    <Desktop>
      <Global />
      <TopPanel>
        <WindowTitle>PaperBulb - Index - Mozilla Firefox</WindowTitle>
        <Indicators>
          <svg width="17" height="18" viewBox="0 0 17 18" fill="#dfdbd2"><path d="M5 1L10 6H7v6H3V6H0zM12 17L7 12h3V5h4v7h3z" /></svg>
          <Lang>De</Lang>
          <svg width="23" height="14" viewBox="0 0 23 14"><rect x=".7" y="1.5" width="19" height="11" rx="1" fill="none" stroke="#dfdbd2" strokeWidth="1.3" /><path d="M20 4h2v6h-2" fill="none" stroke="#dfdbd2" /><rect x="3" y="3.5" width="14.5" height="7" fill="#77746d" /><path d="M5 4l7 3V4l5 6-7-3v3z" fill="#f0ede5" /></svg>
          <svg width="20" height="16" viewBox="0 0 20 16" style={{ marginLeft: 12 }}><path d="M0 5.5h3L7 2v12L3 10.5H0z" fill="#dfdbd2" /><path d="M9 5q2 3 0 6M12 3q4 5 0 10" fill="none" stroke="#dfdbd2" strokeWidth="1.5" /><path d="M15 1q5 7 0 14" fill="none" stroke="#87847c" strokeWidth="1.5" /></svg>
          <Clock>19:03</Clock>
          <svg width="16" height="16" viewBox="0 0 16 16" fill="none" stroke="#dfdbd2"><path d="M5 3.2A5.5 5.5 0 1 0 11 3.2" strokeWidth="2" /><path d="M8 0v8" strokeWidth="2" /><path d="M2 2l2 2M14 2l-2 2M0 8h3M13 8h3M2 14l2-2M14 14l-2-2M8 13v3" strokeWidth="2" /></svg>
        </Indicators>
      </TopPanel>
      <Body>
        <Launcher>
          <Tile $tone="red"><DashIcon /></Tile>
          <Tile $tone="dark"><FilesIcon /></Tile>
          <Tile $tone="orange"><FirefoxIcon /><Pip /><Pip $right /></Tile>
          <Tile $tone="dark"><OfficeIcon /></Tile>
          <Tile $tone="dark"><OfficeIcon calc /></Tile>
          <Tile $tone="grey"><TerminalIcon /><Pip /></Tile>
          <Tile $tone="dark"><SettingsIcon /></Tile>
          <Tile $tone="green" $active><UpdateIcon /><Pip $blue /></Tile>
          <Tile $tone="dark" $last><TrashIcon /></Tile>
        </Launcher>
        <Browser>
          <TabStrip>
            <TabShape>
              <svg width="243" height="28"><path d="M0 28C10 28 13 24 15 15C17 5 19 0 28 0H212C221 0 224 5 226 14C228 24 231 28 241 28z" fill="#f7f7f6" /></svg>
              <TabText>PaperBulb - Index</TabText>
              <TabClose width="12" height="12"><path d="M2.5 2.5l6.5 6.5M9 2.5L2.5 9" stroke="#5b5a57" strokeWidth="2.2" /></TabClose>
            </TabShape>
            <NewTab width="16" height="16" viewBox="0 0 16 16"><path d="M5.5 .7h5v4.800h4.800v5h-4.800v4.800h-5v-4.800H.7v-5h4.800z" fill="#b5cc4c" stroke="#74a01a" /></NewTab>
          </TabStrip>
          <Toolbar>
            <BackButton><svg width="15" height="15"><path d="M8 1L2 7.5L8 14M2.5 7.5H14" fill="none" stroke="#4c4c4c" strokeWidth="3" /></svg></BackButton>
            <UrlBar>
              <svg width="15" height="15"><circle cx="7.5" cy="7.5" r="7" fill="#a5a5a5" /><path d="M2 4l4-2 3 2-3 3-2 1zM9 8l4-2 1 4-4 3zM4 10l3 1-1 3zM10 2l3 2h-3z" fill="#f0f0f0" /></svg>
              <UrlText><b>localhost</b>:8080/#56c99627f6568405087d9baf</UrlText>
              <Reload><svg width="13" height="13" viewBox="0 0 13 13"><path d="M10 9.5A4.3 4.3 0 1 1 9.7 3.7" fill="none" stroke="#8f9dad" strokeWidth="2" /><path d="M12 .5v6H6z" fill="#8f9dad" /></svg></Reload>
            </UrlBar>
            <SearchBox>
              <svg width="13" height="14"><circle cx="5" cy="5.5" r="4" fill="none" stroke="#8d8c8a" strokeWidth="1.8" /><path d="M8 8.5l4.5 4.5" stroke="#8d8c8a" strokeWidth="2.3" /></svg>Search
            </SearchBox>
            <ToolIcons>
              <svg width="16" height="16" viewBox="0 0 16 16"><path d="M8 1.5l2 4.4 4.8.5-3.6 3.2 1 4.8L8 12l-4.2 2.4 1-4.8L1.200 6.4 6 5.9z" fill="none" stroke="#4c4c4c" strokeWidth="1.6" /></svg>
              <Divider $h="18" $l="6" $r="9" />
              <svg width="14" height="15"><path d="M0 3h4V1h6v2h4v12H0z" fill="#4c4c4c" /><path d="M2 5h10v8H2z" fill="#f4f4f3" /><path d="M3 6.5h2M6 6.5h5M3 9h2M6 9h5M3 11.5h2M6 11.5h5" stroke="#4c4c4c" strokeWidth="1.3" /></svg>
              <svg width="16" height="14" style={{ marginLeft: 23 }}><path d="M1 0h14v6a7 7 0 0 1-14 0z" fill="#4c4c4c" /><path d="M4.5 4.5L8 8l3.5-3.5" stroke="#f4f4f3" strokeWidth="2" fill="none" /></svg>
              <svg width="14" height="14" style={{ marginLeft: 23 }}><path d="M5 0h4v6h5l-7 8-7-8h5z" fill="#4c4c4c" /></svg>
              <svg width="16" height="15" style={{ marginLeft: 23 }}><path d="M0 8L8 0l8 8-1.5 1L8 2.8 1.5 9z" fill="#4c4c4c" /><path d="M3 8.5l5-4.7 5 4.7V14H9.5v-4h-3v4H3z" fill="#4c4c4c" /></svg>
              <svg width="16" height="15" style={{ marginLeft: 22 }}><ellipse cx="8.2" cy="7" rx="7.5" ry="7" fill="#4c4c4c" /><path d="M1 15l2-5 5 4z" fill="#4c4c4c" /><path d="M4 8h8.5q-1 3.5-4.2 3.5T4 8zM5 4h1.5v2H5zM9.5 4H11v2H9.5z" fill="#f4f4f3" /></svg>
              <Divider $h="32" $l="13" $r="13" />
              <svg width="16" height="13"><path d="M1.5 2h13M1.5 6.5h13M1.5 11h13" stroke="#4c4c4c" strokeWidth="2.7" strokeLinecap="round" /></svg>
            </ToolIcons>
          </Toolbar>
          <Viewport>
            <Page>
              <Navbar>
                <Logo />
                <Links>
                  <Link>Options <Caret /></Link>
                  <Link><svg width="14" height="14" viewBox="0 0 14 14" fill="#777"><path d="M9 0l5 5-1 1-1.3-.3L9 8.3 9 11l-1 1-3-3-4.5 4.5L0 13.5 4.2 8.5 2 6l1-1 2.7.1L8.4 2.3 8 1z" /></svg>About</Link>
                </Links>
              </Navbar>
              <Columns>
                <Left>
                  <Label>Frühstück</Label>
                  <Frame>
                    <Doc>
                      <Para>e.g., not meaningful to compute the mean value of a numerical ordinal variable,<br />although it is possible from a computational viewpoint.</Para>
                      <MapBox>
                        <EuropeMap />
                        <ZoomControl><div>+</div><div>-</div></ZoomControl>
                        <LayerControl><LayersIcon /></LayerControl>
                        <Attribution><a>Leaflet</a> | Tiles © Esri — National Geographic, Esri, DeLorme, NAVTEQ, UNEP-WCMC, USGS, NASA, ESA, METI, NRCAN, GEBCO, NOAA, iPC</Attribution>
                      </MapBox>
                      <Caption>are ranked and have for several levels, as such</Caption>
                    </Doc>
                    <Scrollbar v size={30} at={35} />
                    <Scrollbar size={338} at={0} />
                  </Frame>
                </Left>
                <Right>
                  <Label>Paper-List: <svg width="14" height="14"><circle cx="7" cy="7" r="7" fill="#337ab7" /><path d="M5.5 2.2h3v2h-3zM4.5 5.3h4v4.5h1.2v1.7H4.5V9.800h1.2V7H4.5z" fill="#fff" /></svg></Label>
                  <List>{PAPERS.map((p, i) => <Entry key={p} $on={i === 0} $wide={i < 2}>{p}</Entry>)}</List>
                </Right>
              </Columns>
            </Page>
            <Scrollbar v size={618} at={0} dim />
            <Scrollbar size={1036} at={0} dim />
          </Viewport>
        </Browser>
      </Body>
    </Desktop>
  );
}
